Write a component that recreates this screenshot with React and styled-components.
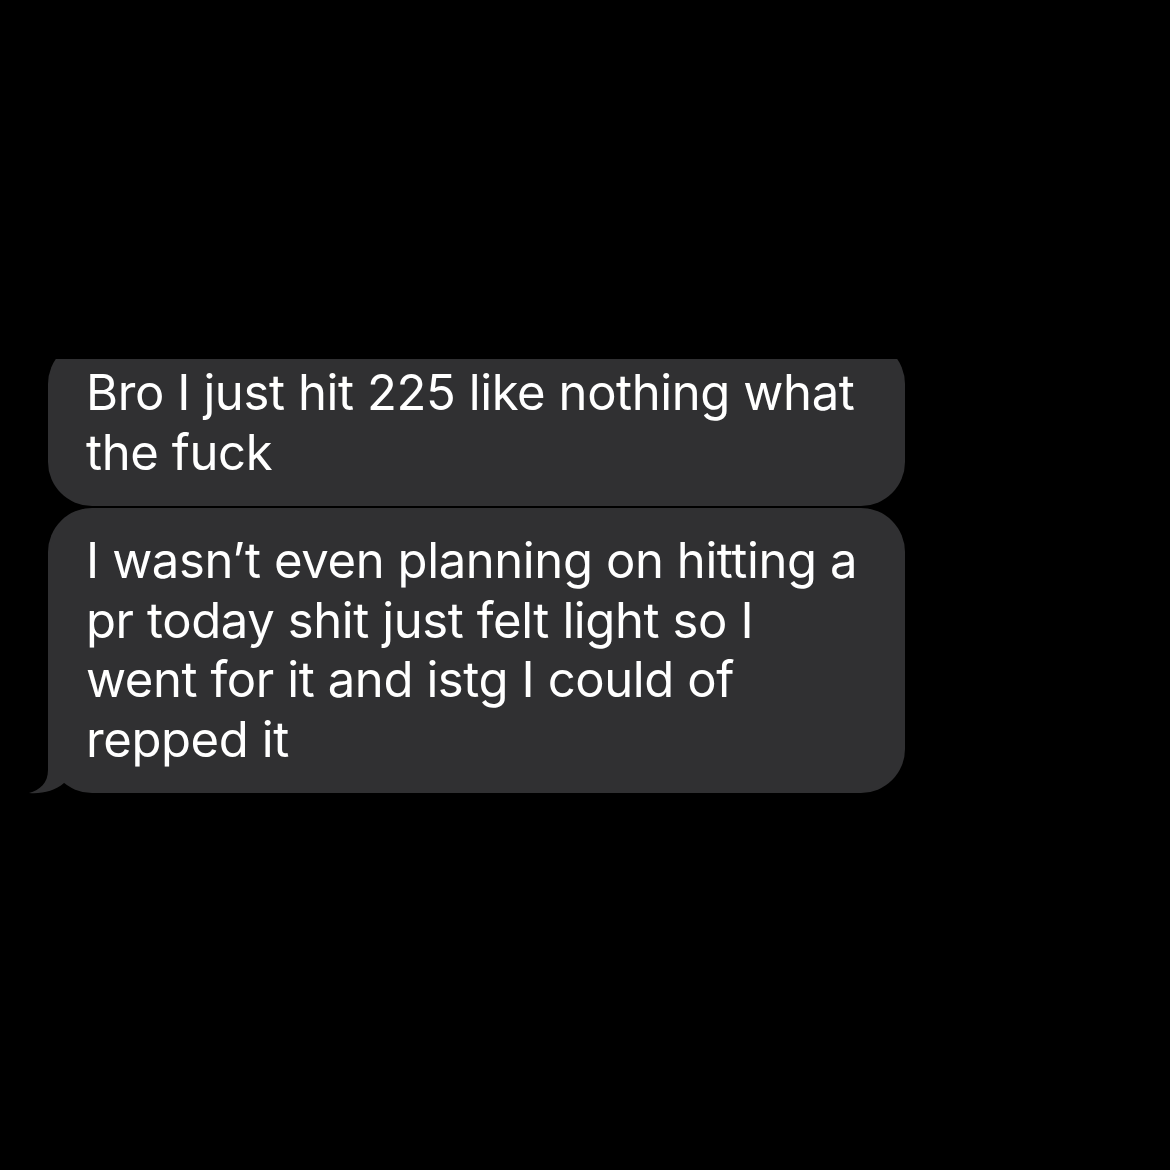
import React from 'react';
import styled, {createGlobalStyle} from "styled-components";

const GlobalStyle = createGlobalStyle`
  html, body {
    margin: 0;
    padding: 0;
    background: #000;
  }
`

const Screen = styled.div`
  width: 1170px;
  height: 1170px;
  background: #000;
  overflow: hidden;
  display: flex;
  flex-direction: column;
  align-items: flex-start;
  padding: 359px 0 0 48px;
  box-sizing: border-box;
`

// clipped at the top like the cropped screenshot, open to the sides for the tail
const Thread = styled.div`
  display: flex;
  flex-direction: column;
  row-gap: 2px;
  clip-path: inset(0 -60px -60px -60px);
`

const Bubble = styled.div`
  position: relative;
  width: 857px;
  box-sizing: border-box;
  margin-top: ${props => props.cropped ? '-19px' : '0'};
  padding: 23px 40px 24px 38px;
  background: #303032;
  border-radius: 44px;
  color: #fff;
  font-family: Inter, "Noto Sans", sans-serif;
  font-size: 49px;
  line-height: 59.5px;
  letter-spacing: -0.4px;
`

const Line = styled.span`
  display: block;
  white-space: nowrap;
`

const Tail = styled.svg`
  position: absolute;
  left: -20px;
  bottom: 0;
  width: 40px;
  height: 53px;
  overflow: visible;
`

const messages = [
    {lines: ['Bro I just hit 225 like nothing what', 'the fuck'], cropped: true},
    {lines: ['I wasn’t even planning on hitting a', 'pr today shit just felt light so I', 'went for it and istg I could of', 'repped it'], tail: true},
]

const App = () => {
    return (
        <>
            <GlobalStyle/>
            <Screen>
                <Thread>
                    {messages.map((m, i) => (
                        <Bubble key={i} cropped={m.cropped}>
                            {m.lines.map(l => <Line key={l}>{l}</Line>)}
                            {m.tail && (
                                <Tail viewBox="0 0 40 53">
                                    <path d="M20 0 L20 30 C20 43 12 50 1 53 C14 54 27 51 36 43 L36 0 Z" fill="#303032"/>
                                </Tail>
                            )}
                        </Bubble>
                    ))}
                </Thread>
            </Screen>
        </>
    );
};

export default App;
